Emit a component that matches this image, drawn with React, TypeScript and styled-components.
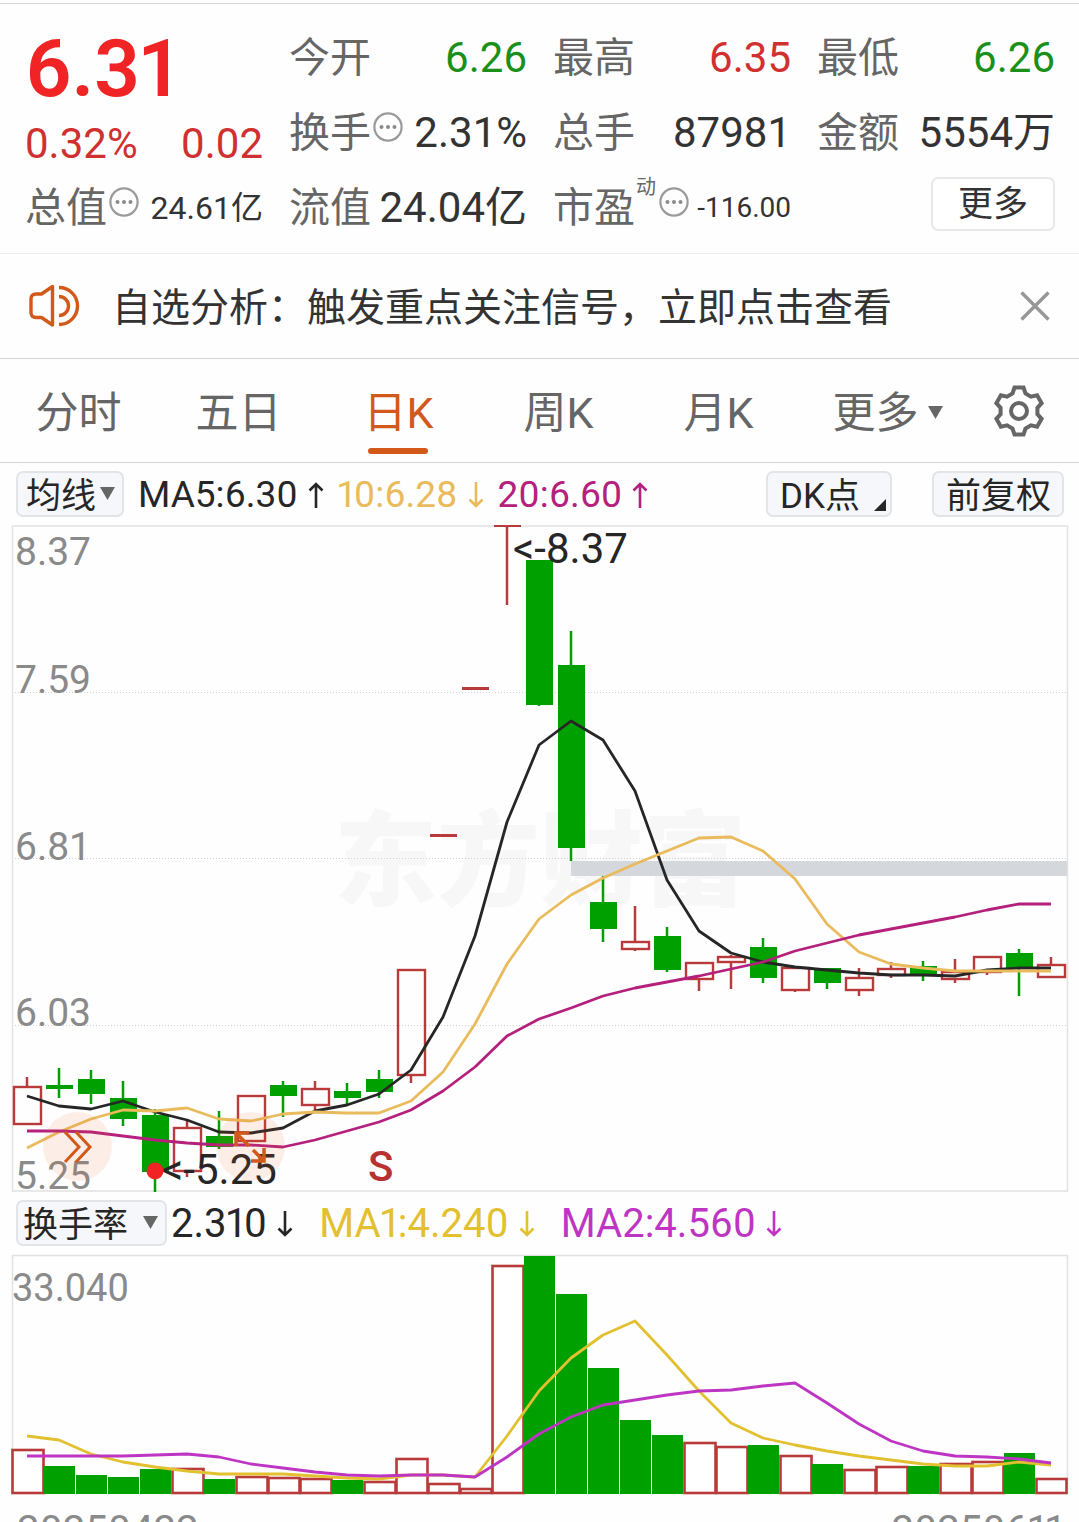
import React, { useState } from "react";
import styled, { createGlobalStyle, css } from "styled-components";

const color = {
  rise: "#b83a3a",
  hot: "#d03030",
  price: "#f02424",
  fall: "#00a000",
  fallText: "#1a901a",
  accent: "#d2591a",
  ink: "#262626",
  text: "#333333",
  label: "#666666",
  axis: "#8a8a8a",
  line: "#d6d6d6",
  frame: "#e3e3e3",
  chip: "#f6f7fa",
  chipLine: "#e2e4e8",
  ma10: "#e9bb5c",
  ma20: "#b4207c",
  vol1: "#e2c030",
  vol2: "#bd35c2",
};

const GlobalStyle = createGlobalStyle`
  *, *::before, *::after { box-sizing: border-box; }
  body {
    margin: 0;
    background: #fefefe;
    color: ${color.text};
    font-family: Roboto, "Noto Sans CJK SC", sans-serif;
  }
  button, select { font: inherit; color: inherit; margin: 0; }
  button { cursor: pointer; }
`;

const Screen = styled.main`
  display: flex;
  flex-direction: column;
  height: 100vh;
  overflow: hidden;
  padding-top: 3px;
  > * { flex-shrink: 0; }
`;

/* ---------- quote ---------- */

const Quote = styled.section`
  display: grid;
  grid-template-columns: repeat(4, 1fr);
  grid-auto-rows: 75px;
  column-gap: 26px;
  padding: 16px 24px 8px 25px;
  border-top: 1px solid ${color.line};
  border-bottom: 1px solid #ececec;
`;

const Headline = styled.div`
  grid-row: span 2;
  display: flex;
  flex-direction: column;
  justify-content: space-between;
  padding: 3px 0;
`;

const Price = styled.strong`
  font-size: 80px;
  line-height: 92px;
  font-weight: 600;
  font-variant-numeric: proportional-nums;
  color: ${color.price};
`;

const Change = styled.div`
  display: flex;
  justify-content: space-between;
  font-size: 42px;
  line-height: 46px;
  color: ${color.hot};
`;

const Cell = styled.div`
  display: flex;
  align-items: center;
  white-space: nowrap;
`;

const CellLabel = styled.span`
  font-size: 41px;
  line-height: 60px;
  color: ${color.label};
`;

const Sup = styled.span`
  align-self: flex-start;
  margin: 3px 1px 0;
  font-size: 20px;
  line-height: 28px;
  color: ${color.label};
`;

const CellValue = styled.span<{ $tone?: string; $size?: number }>`
  margin-left: auto;
  font-size: ${(p) => p.$size ?? 42}px;
  line-height: 60px;
  color: ${(p) => p.$tone ?? color.text};
`;

const InfoButton = styled.button`
  display: flex;
  padding: 0 0 12px 2px;
  border: 0;
  background: none;
`;

const MoreButton = styled.button`
  width: 124px;
  height: 54px;
  margin: 0 0 8px auto;
  padding: 2px 0 0;
  border: 2px solid #e8e8e8;
  border-radius: 7px;
  background: #fff;
  font-size: 35px;
  line-height: 48px;
`;

/* ---------- notice ---------- */

const Notice = styled.section`
  display: flex;
  align-items: center;
  height: 105px;
  padding: 0 28px;
  border-bottom: 1px solid ${color.line};
`;

const NoticeLink = styled.a`
  flex: 1;
  display: flex;
  align-items: center;
  gap: 31px;
  font-size: 39px;
  line-height: 56px;
  white-space: nowrap;
  color: ${color.text};
  text-decoration: none;
`;

const NoticeText = styled.span`
  padding-top: 4px;
`;

const IconButton = styled.button`
  display: flex;
  align-items: center;
  justify-content: center;
  padding: 0;
  border: 0;
  background: none;
`;

/* ---------- period tabs ---------- */

const Tabs = styled.nav`
  display: grid;
  grid-template-columns: repeat(5, 160fr) 178fr 81fr;
  height: 104px;
  padding-right: 20px;
  border-bottom: 1px solid ${color.line};
`;

const Tab = styled.button<{ $active?: boolean }>`
  position: relative;
  display: flex;
  align-items: center;
  justify-content: center;
  gap: 9px;
  padding: 4px 3px 0 0;
  border: 0;
  background: none;
  font-size: 43px;
  line-height: 60px;
  white-space: nowrap;
  color: ${color.label};
  ${(p) =>
    p.$active &&
    css`
      color: ${color.accent};
      &::after {
        content: "";
        position: absolute;
        left: calc(50% - 32px);
        bottom: 8px;
        width: 60px;
        height: 6px;
        border-radius: 3px;
        background: ${color.accent};
      }
    `}
`;

/* ---------- indicator rows ---------- */

const IndicatorBar = styled.div<{ $size: number; $gap: number }>`
  display: flex;
  align-items: center;
  height: 62px;
  padding: 0 15px 0 16px;
  gap: ${(p) => p.$gap}px;
  font-size: ${(p) => p.$size}px;
  font-variant-numeric: proportional-nums;
  line-height: 46px;
  white-space: nowrap;
`;

const Group = styled.div<{ $gap: number; $push?: boolean }>`
  display: flex;
  align-items: center;
  gap: ${(p) => p.$gap}px;
  margin-left: ${(p) => (p.$push ? "auto" : "0")};
`;

const chip = css`
  height: 46px;
  border: 2px solid ${color.chipLine};
  border-radius: 7px;
  background: ${color.chip};
  font-size: 35px;
  line-height: 42px;
  color: ${color.ink};
`;

const Picker = styled.label<{ $width: number }>`
  position: relative;
  width: ${(p) => p.$width}px;
  svg {
    position: absolute;
    top: 16px;
    right: 9px;
    pointer-events: none;
  }
`;

const PickerSelect = styled.select<{ $pad: number }>`
  ${chip}
  display: block;
  width: 100%;
  padding: 3px 0 0 ${(p) => p.$pad}px;
  appearance: none;
`;

const ChipButton = styled.button<{ $width: number }>`
  ${chip}
  position: relative;
  width: ${(p) => p.$width}px;
  padding: 3px 12px 0;
  text-align: left;
  svg {
    position: absolute;
    right: 4px;
    bottom: 4px;
  }
`;

const Reading = styled.span<{ $tone: string }>`
  display: flex;
  align-items: center;
  gap: 10px;
  padding-top: 2px;
  color: ${(p) => p.$tone};
`;

/* ---------- charts ---------- */

const ChartArea = styled.div`
  position: relative;
`;

const Chart = styled.svg`
  display: block;
  width: 100%;
  height: auto;
`;

const ChartTool = styled.button<{ $left: number }>`
  position: absolute;
  left: ${(p) => p.$left}%;
  bottom: 11px;
  display: flex;
  align-items: center;
  justify-content: center;
  width: 69px;
  height: 69px;
  padding: 0;
  border: 0;
  border-radius: 50%;
  background: rgba(240, 110, 50, 0.11);
`;

const Dates = styled.div`
  display: flex;
  justify-content: space-between;
  padding: 12px 16px 0 17px;
  font-size: 40px;
  font-variant-numeric: proportional-nums;
  line-height: 46px;
  color: ${color.axis};
`;

/* ---------- icons ---------- */

const MoreDots = () => (
  <svg width="30" height="30" viewBox="0 0 30 30" aria-hidden="true">
    <circle cx="15" cy="15" r="13.6" fill="none" stroke="#9a9a9a" strokeWidth="2.2" />
    {[8.5, 15, 21.5].map((x) => (
      <circle key={x} cx={x} cy="15" r="2" fill="#8a8a8a" />
    ))}
  </svg>
);

const Speaker = () => (
  <svg width="53" height="44" viewBox="0 0 53 44" fill="none" stroke={color.accent} strokeWidth="3.4" aria-hidden="true">
    <path d="M24.5 2.500v38.500L13.500 33.500H8q-5 0-5-5V15q0-5 5-5h5.500z" strokeLinejoin="round" />
    <path d="M31 3.500A18.500 18.500 0 0 1 31 40.500" />
    <path d="M31 12.500A9.500 9.500 0 0 1 31 31.500" />
  </svg>
);

const Close = () => (
  <svg width="32" height="32" viewBox="0 0 32 32" stroke="#979797" strokeWidth="3.4" aria-hidden="true">
    <path d="M2.500 2.500l27 27M29.500 2.500l-27 27" />
  </svg>
);

const gearOutline = Array.from({ length: 6 }, (_, k) => {
  const a = (k * Math.PI) / 3;
  return [
    [-6.5, -17.5],
    [-4.5, -23.5],
    [4.5, -23.5],
    [6.5, -17.5],
  ]
    .map(([x, y]) => `${(x * Math.cos(a) - y * Math.sin(a)).toFixed(2)},${(x * Math.sin(a) + y * Math.cos(a)).toFixed(2)}`)
    .join(" ");
}).join(" ");

const Gear = () => (
  <svg width="54" height="54" viewBox="-27 -27 54 54" fill="none" stroke={color.label} strokeWidth="4" aria-hidden="true">
    <polygon points={gearOutline} />
    <circle r="8" />
  </svg>
);

const Triangle = ({ fill = color.label }: { fill?: string }) => (
  <svg width="15" height="13" viewBox="0 0 15 13" aria-hidden="true">
    <path d="M0 0h15L7.500 13z" fill={fill} />
  </svg>
);

const Corner = () => (
  <svg width="12" height="12" viewBox="0 0 12 12" aria-hidden="true">
    <path d="M12 0v12H0z" fill={color.ink} />
  </svg>
);

const Arrow = ({ up }: { up?: boolean }) => (
  <svg width="16" height="28" viewBox="0 0 16 28" fill="none" stroke="currentColor" strokeWidth="2.600" aria-label={up ? "up" : "down"}>
    <path d={up ? "M8 27V3M1.500 9.500L8 3l6.500 6.500" : "M8 1v24M1.500 18.500L8 25l6.500-6.500"} />
  </svg>
);

/* ---------- data ---------- */

const STEP = 32;
const FIRST = 27;
const xAt = (i: number) => FIRST + STEP * i;

type Candle = [up: 0 | 1, high: number, top: number, bottom: number, low: number];

const candles: Candle[] = [
  [1, 1077, 1086, 1125, 1125],
  [0, 1068, 1085, 1089, 1098],
  [0, 1070, 1079, 1094, 1104],
  [0, 1081, 1098, 1119, 1126],
  [0, 1109, 1115, 1172, 1192],
  [1, 1121, 1127, 1172, 1177],
  [0, 1111, 1136, 1147, 1149],
  [1, 1095, 1095, 1142, 1142],
  [0, 1081, 1085, 1096, 1117],
  [1, 1081, 1088, 1106, 1110],
  [0, 1083, 1091, 1098, 1104],
  [0, 1070, 1079, 1092, 1098],
  [1, 969, 969, 1076, 1083],
  [1, 834, 834, 837, 837],
  [1, 687, 687, 690, 690],
  [1, 525, 525, 527, 605],
  [0, 560, 560, 705, 706],
  [0, 631, 665, 848, 861],
  [0, 876, 902, 929, 942],
  [1, 906, 941, 950, 951],
  [0, 927, 936, 970, 972],
  [1, 962, 962, 980, 991],
  [1, 955, 956, 963, 989],
  [0, 938, 947, 978, 983],
  [1, 967, 967, 991, 992],
  [0, 968, 968, 983, 989],
  [1, 968, 977, 991, 996],
  [1, 962, 968, 976, 978],
  [0, 961, 966, 976, 981],
  [1, 959, 971, 980, 983],
  [1, 956, 956, 973, 975],
  [0, 949, 953, 969, 996],
  [1, 957, 964, 978, 978],
];

const ma5 = [
  1096, 1106, 1109, 1101, 1112, 1120, 1132, 1133, 1128, 1111, 1105, 1094, 1070, 1017, 936, 822, 745, 721, 740, 791, 880,
  931, 953, 962, 967, 970, 973, 975, 975, 976, 970, 968, 968,
];
const ma10 = [
  1148, 1132, 1119, 1110, 1111, 1108, 1119, 1121, 1114, 1112, 1113, 1113, 1101, 1072, 1024, 964, 919, 895, 878, 864, 851,
  838, 837, 851, 879, 924, 952, 964, 968, 971, 971, 971, 971,
];
const ma20 = [
  1131, 1131, 1132, 1136, 1140, 1143, 1145, 1145, 1147, 1140, 1131, 1122, 1110, 1091, 1067, 1036, 1019, 1008, 996, 988,
  982, 976, 969, 962, 951, 943, 935, 929, 923, 917, 910, 904, 904,
];

const turnoverTops = [
  1449, 1466, 1475, 1477, 1469, 1468, 1479, 1476, 1477, 1478, 1480, 1481, 1458, 1483, 1488, 1265, 1256, 1294, 1368, 1420,
  1435, 1442, 1446, 1445, 1455, 1464, 1469, 1466, 1466, 1463, 1461, 1453, 1478,
];
const turnoverUp = new Set([0, 5, 7, 8, 9, 11, 12, 13, 14, 15, 21, 22, 24, 26, 27, 29, 30, 32]);

const volMa1 = [
  1436, 1440, 1454, 1462, 1467, 1471, 1474, 1474, 1474, 1476, 1478, 1479, 1475, 1475, 1477, 1436, 1391, 1358, 1335, 1321,
  1355, 1391, 1423, 1438, 1445, 1451, 1456, 1460, 1464, 1466, 1466, 1462, 1465,
];
const volMa2 = [
  1456, 1456, 1456, 1456, 1455, 1454, 1457, 1464, 1468, 1472, 1475, 1476, 1475, 1475, 1477, 1457, 1434, 1417, 1405, 1400,
  1395, 1391, 1390, 1386, 1383, 1403, 1424, 1441, 1451, 1456, 1457, 1459, 1463,
];

const axisLabels: [string, number][] = [
  ["8.37", 565],
  ["7.59", 693],
  ["6.81", 860],
  ["6.03", 1026],
  ["5.25", 1189],
];

const Curve = ({ ys, stroke }: { ys: number[]; stroke: string }) => (
  <polyline
    points={ys.map((y, i) => `${xAt(i)},${y}`).join(" ")}
    fill="none"
    stroke={stroke}
    strokeWidth="2.800"
    strokeLinejoin="round"
  />
);

const CandleMark = ({ i, candle }: { i: number; candle: Candle }) => {
  const [up, high, top, bottom, low] = candle;
  const x = xAt(i);
  const tone = up ? color.rise : color.fall;
  const flat = bottom - top < 4 && up;
  return (
    <g>
      {high < top && <path d={`M${x} ${high}V${top}`} stroke={tone} strokeWidth="2.500" />}
      {low > bottom && <path d={`M${x} ${bottom}V${low}`} stroke={tone} strokeWidth="2.500" />}
      {up && !flat ? (
        <rect x={x - 13} y={top + 1} width="27" height={bottom - top - 2} fill="none" stroke={tone} strokeWidth="2.400" />
      ) : (
        <rect x={x - 13} y={top} width="27" height={bottom - top} fill={tone} />
      )}
    </g>
  );
};

const PriceChart = () => (
  <Chart viewBox="0 525 1079 667" role="img" aria-label="日K">
    <text x="334" y="898" fontSize="103" fontWeight="900" fill="#f7f7f7">
      东方财富
    </text>
    <g stroke="#cfcfcf" strokeDasharray="1 2">
      {[692.5, 858.5, 1025.5].map((y) => (
        <path key={y} d={`M12 ${y}H1067`} />
      ))}
    </g>
    <rect x="12.500" y="526" width="1055" height="665" fill="none" stroke={color.frame} strokeWidth="1.600" />
    <rect x="571" y="861" width="496" height="15" fill="#d4d7dc" />
    {candles.map((c, i) => (
      <CandleMark key={i} i={i} candle={c} />
    ))}
    <Curve ys={ma5} stroke={color.ink} />
    <Curve ys={ma10} stroke={color.ma10} />
    <Curve ys={ma20} stroke={color.ma20} />
    <g fontSize="39" fill={color.axis}>
      {axisLabels.map(([t, y]) => (
        <text key={t} x="15" y={y}>
          {t}
        </text>
      ))}
    </g>
    <g fontSize="42" fill={color.ink}>
      <text x="513" y="563">&lt;-8.37</text>
      <text x="162" y="1184">&lt;-5.25</text>
    </g>
    <circle cx="155" cy="1171" r="8.500" fill={color.price} />
    <text x="368" y="1181" fontSize="42" fontWeight="500" fill="#b83232">
      S
    </text>
  </Chart>
);

const TurnoverChart = () => (
  <Chart viewBox="0 1254 1079 242" role="img" aria-label="换手率">
    <path d="M12.500 1494V1255.500H1067.500V1494" fill="none" stroke={color.frame} strokeWidth="1.600" />
    <text x="12" y="1301" fontSize="38" fill={color.axis}>
      33.040
    </text>
    {turnoverTops.map((top, i) => {
      const x = 12 + STEP * i;
      return turnoverUp.has(i) ? (
        <rect key={i} x={x + 0.500} y={top + 1} width={i === 32 ? 30 : 31} height={1493 - top - 1} fill="#fff" stroke={color.rise} strokeWidth="2.600" />
      ) : (
        <rect key={i} x={x} y={top} width="31" height={1494 - top} fill={color.fall} />
      );
    })}
    <Curve ys={volMa1} stroke={color.vol1} />
    <Curve ys={volMa2} stroke={color.vol2} />
  </Chart>
);

/* ---------- page ---------- */

const periods = ["分时", "五日", "日K", "周K", "月K"];

export default function App() {
  const [period, setPeriod] = useState("日K");

  return (
    <>
      <GlobalStyle />
      <Screen>
        <Quote>
          <Headline>
            <Price>6.31</Price>
            <Change>
              <span>0.32%</span>
              <span>0.02</span>
            </Change>
          </Headline>
          <Cell>
            <CellLabel>今开</CellLabel>
            <CellValue $tone={color.fallText}>6.26</CellValue>
          </Cell>
          <Cell>
            <CellLabel>最高</CellLabel>
            <CellValue $tone={color.hot}>6.35</CellValue>
          </Cell>
          <Cell>
            <CellLabel>最低</CellLabel>
            <CellValue $tone={color.fallText}>6.26</CellValue>
          </Cell>
          <Cell>
            <CellLabel>换手</CellLabel>
            <InfoButton aria-label="换手">
              <MoreDots />
            </InfoButton>
            <CellValue>2.31%</CellValue>
          </Cell>
          <Cell>
            <CellLabel>总手</CellLabel>
            <CellValue>87981</CellValue>
          </Cell>
          <Cell>
            <CellLabel>金额</CellLabel>
            <CellValue>5554万</CellValue>
          </Cell>
          <Cell>
            <CellLabel>总值</CellLabel>
            <InfoButton aria-label="总值">
              <MoreDots />
            </InfoButton>
            <CellValue $size={32}>24.61亿</CellValue>
          </Cell>
          <Cell>
            <CellLabel>流值</CellLabel>
            <CellValue>24.04亿</CellValue>
          </Cell>
          <Cell>
            <CellLabel>市盈</CellLabel>
            <Sup>动</Sup>
            <InfoButton aria-label="市盈">
              <MoreDots />
            </InfoButton>
            <CellValue $size={28}>-116.00</CellValue>
          </Cell>
          <Cell>
            <MoreButton>更多</MoreButton>
          </Cell>
        </Quote>

        <Notice>
          <NoticeLink href="#signals">
            <Speaker />
            <NoticeText>自选分析：触发重点关注信号，立即点击查看</NoticeText>
          </NoticeLink>
          <IconButton aria-label="关闭">
            <Close />
          </IconButton>
        </Notice>

        <Tabs>
          {periods.map((p) => (
            <Tab key={p} $active={p === period} onClick={() => setPeriod(p)}>
              {p}
            </Tab>
          ))}
          <Tab aria-haspopup="menu">
            更多
            <Triangle />
          </Tab>
          <IconButton aria-label="设置">
            <Gear />
          </IconButton>
        </Tabs>

        <IndicatorBar $size={37} $gap={14}>
          <Picker $width={108}>
            <PickerSelect $pad={8} aria-label="均线">
              <option>均线</option>
            </PickerSelect>
            <Triangle />
          </Picker>
          <Reading $tone={color.ink}>
            MA5:6.30
            <Arrow up />
          </Reading>
          <Reading $tone={color.ma10}>
            10:6.28
            <Arrow />
          </Reading>
          <Reading $tone={color.ma20}>
            20:6.60
            <Arrow up />
          </Reading>
          <Group $gap={40} $push>
            <ChipButton $width={126}>
              DK点
              <Corner />
            </ChipButton>
            <ChipButton $width={132}>前复权</ChipButton>
          </Group>
        </IndicatorBar>

        <ChartArea>
          <PriceChart />
          <ChartTool $left={4} aria-label="展开">
            <svg width="30" height="34" viewBox="0 0 30 34" fill="none" stroke={color.accent} strokeWidth="3" aria-hidden="true">
              <path d="M2 2l14 15L2 32M13 2l14 15L13 32" />
            </svg>
          </ChartTool>
          <ChartTool $left={20} aria-label="全屏">
            <svg width="34" height="34" viewBox="0 0 34 34" fill="none" stroke={color.accent} strokeWidth="3.500" aria-hidden="true">
              <path d="M3 16V3h13M3 3l13 13M31 18v13H18M31 31L20 20" />
            </svg>
          </ChartTool>
        </ChartArea>

        <IndicatorBar $size={40} $gap={26}>
          <Group $gap={4}>
            <Picker $width={151}>
              <PickerSelect $pad={5} aria-label="换手率">
                <option>换手率</option>
              </PickerSelect>
              <Triangle />
            </Picker>
            <Reading $tone={color.ink}>
              2.310
              <Arrow />
            </Reading>
          </Group>
          <Reading $tone={color.vol1}>
            MA1:4.240
            <Arrow />
          </Reading>
          <Reading $tone={color.vol2}>
            MA2:4.560
            <Arrow />
          </Reading>
        </IndicatorBar>

        <TurnoverChart />
        <Dates>
          <span>20250422</span>
          <span>20250611</span>
        </Dates>
      </Screen>
    </>
  );
}
